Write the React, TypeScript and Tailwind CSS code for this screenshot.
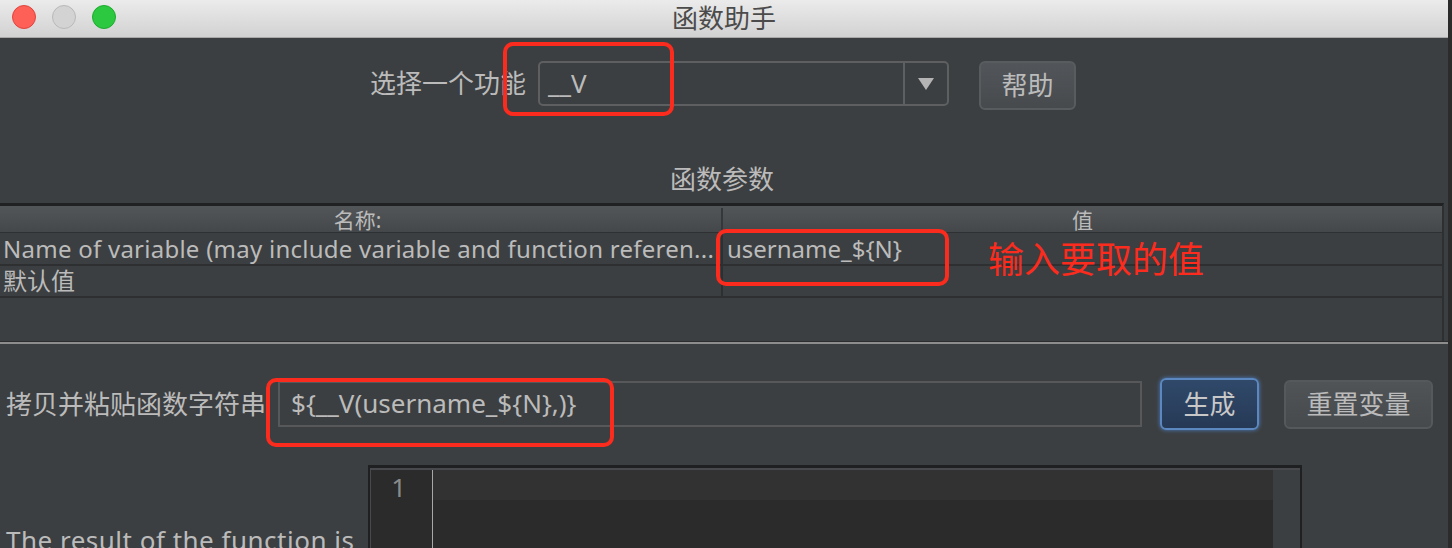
import React from "react";

const FONT = "font-['Noto_Sans','Noto_Sans_CJK_SC',sans-serif]";

function TrafficLights() {
  return (
    <div className="flex items-center gap-[16px] pl-[12px]">
      <div className="w-[24px] h-[24px] rounded-full bg-[#fe5f57] border border-[#e0443e]" />
      <div className="w-[24px] h-[24px] rounded-full bg-[#d3d3d3] border border-[#b9b9b9]" />
      <div className="w-[24px] h-[24px] rounded-full bg-[#2bc840] border border-[#1eab2f]" />
    </div>
  );
}

function TitleBar() {
  return (
    <div className="relative h-[38px] w-[1448px] flex items-center bg-gradient-to-b from-[#ebebeb] to-[#d2d2d2] border-b border-[#a9a9a9] pb-[4px]">
      <TrafficLights />
      <div className="absolute inset-x-0 top-[3px] text-center text-[26px] leading-[30px] text-[#4b4b4b]">
        函数助手
      </div>
    </div>
  );
}

function Annotation({ className }: { className: string }) {
  return (
    <div
      className={`absolute border-[4px] border-[#fb2b1e] rounded-[10px] pointer-events-none ${className}`}
    />
  );
}

export default function App() {
  return (
    <div
      className={`relative w-[1452px] h-[548px] overflow-hidden bg-[#2b2b2b] ${FONT} text-[#bbbbbb]`}
    >
      <div className="w-[1448px] h-full bg-[#3c3f41] overflow-hidden">
        <TitleBar />

        {/* function selector */}
        <div className="flex justify-center items-start pt-[23px] pr-[2px]">
          <div className="text-[26px] leading-[45px] mr-[12px]">选择一个功能</div>
          <div className="w-[411px] h-[45px] flex rounded-[5px] border-2 border-[#5e5f60]">
            <div className="flex-1 pl-[8px] text-[26px] leading-[40px]">__V</div>
            <div className="w-[44px] border-l-2 border-[#5e5f60] flex items-center justify-center">
              <div className="w-0 h-0 border-l-[8px] border-r-[8px] border-t-[12px] border-l-transparent border-r-transparent border-t-[#b4b4b4]" />
            </div>
          </div>
          <button className="ml-[30px] w-[97px] h-[49px] rounded-[6px] border-2 border-[#595c5e] bg-gradient-to-b from-[#52565a] to-[#474a4d] text-[26px] text-[#bbbbbb]">
            帮助
          </button>
        </div>

        <div className="mt-[56px] text-center text-[26px] leading-[26px] pr-[4px]">函数参数</div>

        {/* parameters table */}
        <div className="mt-[11px] w-[1444px] border-t-[3px] border-[#1f2123] border-r-2 border-r-[#2d2f31]">
          <div className="flex h-[27px] pt-[2px] bg-gradient-to-b from-[#535659] to-[#45484b] border-b border-[#2e3032] text-[21px] leading-[24px]">
            <div className="w-[723px] border-r-2 border-[#35373a] text-center pr-[6px]">名称:</div>
            <div className="flex-1 text-center">值</div>
          </div>
          <div className="flex h-[33px] border-b-2 border-[#2d2f31] text-[24px] leading-[31px]">
            <div className="w-[723px] border-r-2 border-[#2d2f31] pl-[3px] whitespace-nowrap overflow-hidden tracking-[0.25px]">
              Name of variable (may include variable and function referen...
            </div>
            <div className="flex-1 pl-[4px] whitespace-nowrap">username_${"{"}N{"}"}</div>
          </div>
          <div className="flex h-[32px] border-b-2 border-[#2d2f31] text-[24px] leading-[30px]">
            <div className="w-[723px] border-r-2 border-[#2d2f31] pl-[3px]">默认值</div>
            <div className="flex-1" />
          </div>
          <div className="h-[43px]" />
        </div>
        <div className="h-[3px] bg-[#8d8d8d] border-t border-[#2b2d2f] w-[1448px]" />

        {/* generated string */}
        <div className="flex items-center pl-[6px] mt-[34px]">
          <div className="text-[26px] leading-[52px] w-[272px] whitespace-nowrap">拷贝并粘贴函数字符串</div>
          <div className="w-[864px] h-[46px] border-2 border-[#56585a] pl-[11px] text-[26px] leading-[40px] text-[#bbbbbb]">
            ${"{"}__V(username_${"{"}N{"}"},){"}"}
          </div>
          <button className="ml-[18px] w-[99px] h-[52px] rounded-[6px] border-2 border-[#5c88c2] shadow-[0_0_4px_#4a7fc4] bg-gradient-to-b from-[#30496a] to-[#263a56] text-[26px] text-[#c8c8c8]">
            生成
          </button>
          <button className="ml-[25px] w-[149px] h-[49px] rounded-[6px] border-2 border-[#56595b] bg-gradient-to-b from-[#505457] to-[#474a4d] text-[26px] text-[#bbbbbb]">
            重置变量
          </button>
        </div>

        {/* result */}
        <div className="flex mt-[35px] pl-[6px]">
          <div className="w-[362px] pt-[60px] text-[26px] leading-[30px] whitespace-nowrap tracking-[0.5px]">
            The result of the function is
          </div>
          <div className="w-[934px] h-[120px] border-t-[3px] border-l-[2px] border-r-2 border-[#1e2022] flex bg-[#3c3f41]">
            <div className="flex-1 flex border-t-[2px] border-l border-[#47494c]">
              <div className="w-[62px] bg-[#2b2b2b] border-r border-[#a8a8a8] text-right pr-[26px] text-[26px] leading-[34px] text-[#8a8a8a]">
                1
              </div>
              <div className="w-[840px] bg-[#2b2b2b]">
                <div className="h-[30px] bg-[#323232]" />
              </div>
            </div>
          </div>
        </div>
      </div>

      {/* annotations */}
      <Annotation className="left-[503px] top-[42px] w-[171px] h-[74px]" />
      <Annotation className="left-[716px] top-[229px] w-[233px] h-[57px]" />
      <Annotation className="left-[266px] top-[378px] w-[348px] h-[69px]" />
      <div className="absolute left-[988px] top-[238px] text-[36px] leading-[44px] text-[#fb2b1e]">
        输入要取的值
      </div>
    </div>
  );
}
